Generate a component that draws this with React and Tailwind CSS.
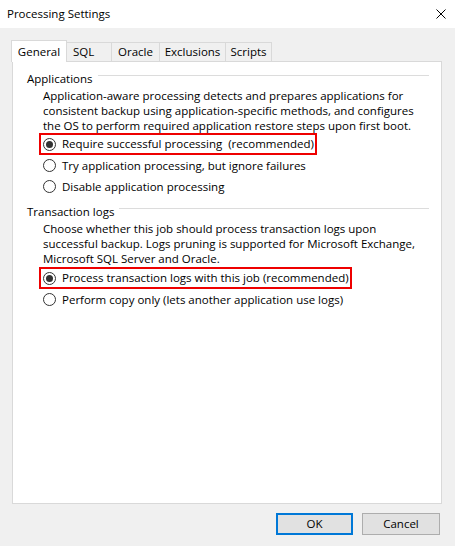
import React from 'react';

const font = { fontFamily: '"Open Sans", "Liberation Sans", sans-serif' };

function Radio({ checked, label }) {
    return (
        <div className="flex items-center h-[21px]">
            <span className="w-[13px] h-[13px] rounded-full border border-[#333333] bg-white flex items-center justify-center shrink-0">
                {checked && <span className="w-[7px] h-[7px] rounded-full bg-[#333333]" />}
            </span>
            <span className="ml-[6px] whitespace-pre">{label}</span>
        </div>
    );
}

// red annotation frame around the recommended option
function Marked({ children }) {
    return (
        <div className="flex">
            <div className="ml-[-4px] border-2 border-[#ee0000] pl-[2px] pr-[1px] h-[22px] flex items-center">
                {children}
            </div>
        </div>
    );
}

function GroupTitle({ children }) {
    return (
        <div className="flex items-center h-[15px]">
            <span className="whitespace-nowrap">{children}</span>
            <span className="flex-1 h-px bg-[#dcdcdc] ml-[5px] mt-[-6px]" />
        </div>
    );
}

export default function App() {
    const tabs = [
        { name: 'SQL', w: 'w-[46px] justify-start pl-[6px]' },
        { name: 'Oracle', w: 'w-[49px] justify-center' },
        { name: 'Exclusions', w: 'w-[67px] justify-center' },
        { name: 'Scripts', w: 'w-[47px] justify-center' },
    ];

    return (
        <div className="w-[455px] h-[546px] bg-[#f0f0f0] flex flex-col text-[11.5px] text-black" style={font}>
            {/* title bar */}
            <div className="h-[28px] bg-white flex items-center justify-between pl-[7px] pr-[9px] shrink-0">
                <span>Processing Settings</span>
                <svg width="10" height="10" viewBox="0 0 10 10">
                    <path d="M0.5 0.5 L9.5 9.5 M9.5 0.5 L0.5 9.5" stroke="#000" strokeWidth="1" />
                </svg>
            </div>

            <div className="flex-1 flex flex-col pl-[12px] pr-[13px] pt-[12px]">
                {/* tabs */}
                <div className="flex items-end h-[21px] ml-[-1px]">
                    <div className="relative z-10 w-[56px] h-[22px] mb-[-1px] bg-white border border-b-0 border-[#d9d9d9] flex items-start justify-center pt-[2px]">
                        General
                    </div>
                    {tabs.map((t) => (
                        <div
                            key={t.name}
                            className={`${t.w} ml-[-1px] h-[19px] bg-[#f0f0f0] border border-b-0 border-[#d9d9d9] flex items-center`}
                        >
                            {t.name}
                        </div>
                    ))}
                </div>

                {/* panel */}
                <div className="h-[443px] bg-white border border-[#d9d9d9] pl-[14px] pr-[12px] pt-[9px]">
                    <GroupTitle>Applications</GroupTitle>
                    <div className="pl-[16px] mt-[2px]">
                        <p className="leading-[15px]">
                            Application-aware processing detects and prepares applications for
                            <br />
                            consistent backup using application-specific methods, and configures
                            <br />
                            the OS to perform required application restore steps upon first boot.
                        </p>
                        <Marked>
                            <Radio checked label="Require successful processing  (recommended)" />
                        </Marked>
                        <Radio label="Try application processing, but ignore failures" />
                        <Radio label="Disable application processing" />
                    </div>

                    <div className="mt-[7px]">
                        <GroupTitle>Transaction logs</GroupTitle>
                    </div>
                    <div className="pl-[16px] mt-[2px]">
                        <p className="leading-[15px]">
                            Choose whether this job should process transaction logs upon
                            <br />
                            successful backup. Logs pruning is supported for Microsoft Exchange,
                            <br />
                            Microsoft SQL Server and Oracle.
                        </p>
                        <div className="mt-[1px]">
                            <Marked>
                                <Radio checked label="Process transaction logs with this job (recommended)" />
                            </Marked>
                        </div>
                        <Radio label="Perform copy only (lets another application use logs)" />
                    </div>
                </div>

                {/* buttons */}
                <div className="flex justify-end gap-[9px] pt-[9px] pr-[2px]">
                    <button className="w-[77px] h-[22px] bg-[#e1e1e1] border-2 border-[#0078d7] flex items-center justify-center">
                        OK
                    </button>
                    <button className="w-[78px] h-[22px] bg-[#e1e1e1] border border-[#adadad] flex items-center justify-center">
                        Cancel
                    </button>
                </div>
            </div>
        </div>
    );
}
